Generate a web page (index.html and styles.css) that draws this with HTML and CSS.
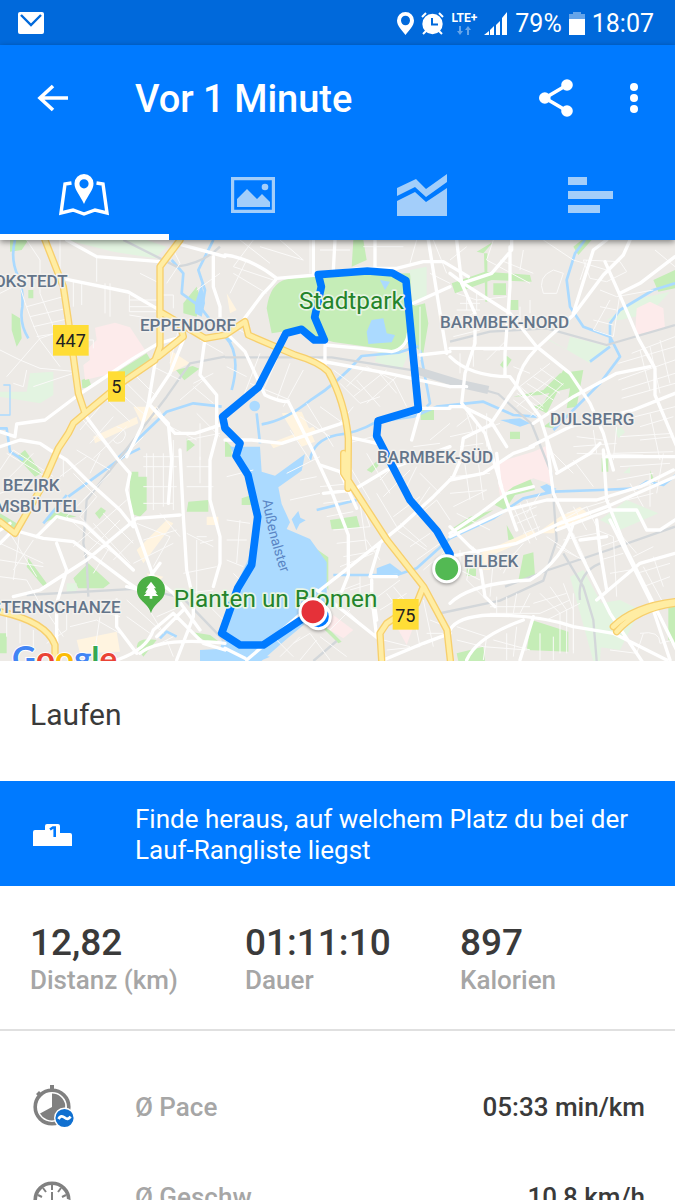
FILE: index.html
```html
<!DOCTYPE html>
<html lang="de">
<head>
<meta charset="utf-8">
<meta name="viewport" content="width=device-width, initial-scale=1">
<title>Vor 1 Minute</title>
<link rel="stylesheet" href="styles.css">
</head>
<body>
<div class="app">
  <div class="status">
    <svg class="status-mail" width="26" height="22" viewBox="0 0 26 22"><rect width="26" height="22" rx="2" fill="#fff"/><path d="M3 3l10 10L23 3" fill="none" stroke="#0069db" stroke-width="2.4"/></svg>
    <div class="status-right">
      <svg width="17" height="23" viewBox="0 0 17 23"><path fill="#fff" fill-rule="evenodd" d="M8.500 0A8.500 8.500 0 0 0 0 8.500C0 14 5 18 8.500 23C12 18 17 14 17 8.500A8.500 8.500 0 0 0 8.500 0zm0 3.700a4.500 4.800 0 1 1 0 9.600a4.500 4.800 0 0 1 0-9.600z"/></svg>
      <svg width="23" height="23" viewBox="0 0 23 23"><g stroke="#fff" stroke-width="2" fill="none"><path d="M1 5l4-4M22 5l-4-4M5 19l-3 3M18 19l3 3"/></g><circle cx="11.500" cy="12" r="10.200" fill="#fff"/><path d="M11 6v6.500h6" fill="none" stroke="#0069db" stroke-width="2"/></svg>
      <div class="lte"><span>LTE+</span><svg width="14" height="9" viewBox="0 0 14 9"><path d="M2 0h2v5h2L3 9L0 5h2zM10 9h2V4h2l-3-4l-3 4h2z" fill="#66a5e9"/></svg></div>
      <svg width="24" height="23" viewBox="0 0 24 23"><path d="M0 23l5-4v4zM6 18l4-4v9H6zM12 13l4-4v14h-4zM18 6l5-6v23h-5z" fill="#fff"/></svg>
      <span>79%</span>
      <svg width="16" height="23" viewBox="0 0 16 23"><path d="M4 0h8v2h4v5H0V2h4z" fill="#66a5e9"/><path d="M0 7h16v16H0z" fill="#fff"/></svg>
      <span>18:07</span>
    </div>
  </div>

  <header class="header">
    <div class="toolbar">
      <button class="icon-btn back" aria-label="Zurück"><svg width="32" height="28" viewBox="0 0 32 28" fill="none" stroke="#fff" stroke-width="3.600"><path d="M31 14H4M16 2L3 14l13 12"/></svg></button>
      <h1>Vor 1 Minute</h1>
      <button class="icon-btn" aria-label="Teilen"><svg width="34" height="38" viewBox="0 0 34 38" fill="#fff"><path d="M28 6L6 19l22 13" fill="none" stroke="#fff" stroke-width="3.600"/><circle cx="28" cy="6" r="5.800"/><circle cx="5.800" cy="19" r="5.800"/><circle cx="28" cy="32" r="5.800"/></svg></button>
      <button class="icon-btn more" aria-label="Mehr"><svg width="8" height="32" viewBox="0 0 8 32" fill="#fff"><circle cx="4" cy="5" r="4"/><circle cx="4" cy="16" r="4"/><circle cx="4" cy="27" r="4"/></svg></button>
    </div>
    <nav class="tabs">
      <button class="tab active" aria-label="Karte"><svg width="50" height="44" viewBox="0 0 50 44"><path d="M12.500 10L6 11L2 40l12-3l11 4l11-4l12 3l-4-29l-6.500-1" fill="none" stroke="#fff" stroke-width="3.400"/><path d="M25 1a9.500 9.500 0 0 0-9.500 9.500C15.500 17 21 22 25 31C29 22 34.500 17 34.500 10.500A9.500 9.500 0 0 0 25 1zm0 5.200a4.600 4.600 0 1 1 0 9.200a4.600 4.600 0 0 1 0-9.200z" fill="#fff" fill-rule="evenodd"/></svg></button>
      <button class="tab" aria-label="Fotos"><svg width="44" height="36" viewBox="0 0 44 36" fill="#a3cefa"><path fill-rule="evenodd" d="M0 0h44v36H0zM3.200 3.200v29.600h37.600V3.200z"/><path d="M6 22l10-10l10 10l5-5l8 8v5H6z"/><circle cx="34" cy="10" r="3.300"/></svg></button>
      <button class="tab" aria-label="Diagramm"><svg width="50" height="42" viewBox="0 0 50 42" fill="#a3cefa"><path d="M0 14L19 5l10 10L50 0v8L29 23L18 13L0 22zM0 27l18-9l11 10l21-14v28H0z"/></svg></button>
      <button class="tab" aria-label="Details"><svg width="46" height="36" viewBox="0 0 46 36" fill="#a3cefa"><path d="M0 0h19v8H0zM0 14h45v8H0zM0 28h32v8H0z"/></svg></button>
    </nav>
  </header>

  <main class="content">
    <section class="map" aria-label="Karte">
      <svg class="map-svg" viewBox="0 0 2025 1263" preserveAspectRatio="xMidYMid slice">
        <!-- land use -->
        <g class="park">
          <path d="M30 0h55l-20 30l-35 5zM85 150h15v25H85zM35 220l25 15l5 60l-15 25l-15-50zM245 420l20-8l10 28l-28 5zM345 400L440 340l15 25l-85 60zM550 190l40-50l10 30l-10 60l-40-10zM528 390l50-12l20 8l-45 35zM560 595l25 20l-25 20z"/>
          <path d="M800 205Q810 130 860 118L945 104L1230 100L1248 150L1232 300L1200 334L1000 306L880 270L815 280zM1060 0h30l10 60l-45 20zM1235 200l40-10l10 60l-15 90l-25-20zM1262 510h40v30h-40zM675 600l20 20v30h-20z"/>
          <path d="M1355 130l100-35l135 10l5 20l-120-5l-110 40zM1430 35l50-30l-30 35zM1452 40l10 0l0 145l-6 0zM1480 130h38v35h-38zM1525 180h30v30h-30zM1720 20l25-20h30l-40 45zM1960 120l65-30v55l-50 10zM1500 375l20-28l15 12l-20 30zM1600 500l30-10l60-100l10 10l-60 120zM1540 470l90-20l50-50l70-10l-20 110l-30 5l10-60l-90 20zM1530 575h30v22h-30zM1630 560l40-30l-10 35z"/>
          <path d="M50 650l25-20l50 70l-20 10zM395 695h20v25h-25zM390 710h50v100l-20 20l-30-10zM285 820l18-18l15 10l-20 25zM565 785l60-5v35h-65zM220 1015l45-45l65 60l-20 15l-75 0zM85 955l55 75l-5 15l-55-65zM0 1180h20v60H0zM0 820l50 30l-15 30L0 865zM410 1220q0-30 60-20l-40 50zM570 1175l60 10l40 30l-50-10zM130 850l30-40l70 20l-80 10z"/>
          <path d="M990 840l80-12l10 35l-85 5zM885 882l100 70v100l-30-70zM725 775l30-10v30h-30zM975 1155l50 50l-10 5l-50-50zM1100 690l35-30v18l-20 20z"/>
          <path d="M1525 725l65-10l15 35l-60 15l-30 45l-30-15zM1520 855l25 45h-20zM1570 945l30-8l5 70l-50 15zM1595 1140l110 35v60l-125-5zM1350 870l60-40l70-20l-110 70zM1805 655h20v40h-20zM1950 690l15 35l-10 10zM1400 980h28v28h-28zM1370 1240l80-20l5 43h-80zM2005 1100l20-10v130l-20-20z"/>
        </g>
        <g class="park-light">
          <path d="M200 0L440 0L500 20L465 55L340 35zM90 400l70-5v70l-40 25L0 470v-15l80 0zM1230 90l50-10v90l-45 20zM1135 330l90 10l-20 50l-80-25z"/>
          <path d="M1650 300l120 70l40-30l20-20l-120-30l-10 40l-55-30zM1820 240l100-65l90-20l-60 65l-90 20zM1975 820l-95-40l-80 60l60 30zM1710 1010l40-20l60 110l-10 163h-20zM1800 1090l60-10l60 30l-60 120l-70-10zM1845 570l20-8l10 15l-20 18zM200 1030h30v30h-30zM1870 700l20-20v20z"/>
        </g>
        <g class="pink">
          <path d="M285 263L345 248L390 262L435 330L340 400L255 420L250 375L270 360L265 325L290 300zM1910 205l40-20l40 20l5 60l-90 20zM1500 665l100-30l45-20l15 120l-60-20l-60 25l-40 30l-10-80z"/>
          <path d="M1000 1125l60 45l-30 25l-50-30zM1190 1160l50 0l-20 55z"/>
        </g>
        <g class="sand">
          <path d="M400 500h70v30l-45 20zM280 590l130-60l5 20l-130 60zM510 330l60 40l-60 30zM845 520l60-5l40 90l-40 15zM810 610l130-50l10 15l-130 50zM680 160l30 50l-20 10z"/>
          <path d="M620 830h35v25h-35zM410 930l90-90l20 10l-90 120zM230 1200l120-25l10 60l-120 5zM440 1000l50 10l-30 30zM1610 880l70-50l60-30l30 25l-110 55zM1440 940l160-70l10 15l-120 55l-20 50h-20z"/>
        </g>

        <!-- water -->
        <g class="water">
          <path d="M1100 275l15-35l35-5l10 45l25 5l-10 22l-70 5zM1140 120l30 5l-15 25zM585 190l20-60l10 60l-10 40l-20-10z"/>
          <circle cx="764" cy="498" r="16"/>
          <path d="M690 620l90 0l5 75l40 12l90-65l-10 50l-70 50l10 50l25 55l-10 20l70 30l50 70l0 130l-120 100l-80 70l-120-30l20-140l65-140l20-120l-30-130zM600 1230l100-5l110 25l-30 13h-180zM875 838l20-25l6 20l16 8l-18 10l-10 20zM1130 985l40-15l40 30l-80 5zM1620 740l20-8l30 15l-30 12zM1500 540l60-5l30 15l-30 10z"/>
        </g>
        <g class="stream">
          <path d="M45 0q-15 60 10 110q15 30 12 90q-10 50 18 95M515 60l35 40l-5 60l55 40l50 65l45 40M640 0l-45 90l20 60l-10 60M350 658L500 515l80-25l85 10M675 290q50 50 20 160M0 565l20 0l10 70l40 25"/>
          <path class="thin" d="M10 435h20v90H0"/>
          <path d="M770 520l10 90M785 553q70-10 150-75q80-50 150-130l110-10l60-20M930 660q10-60 80-75q60-5 120-40l110-15l70-30l140-15l90 40l70 5M1260 330l30 160l-10 10M1755 0l-30 40l-25 80l10 80l40 60l80 30l30 60l-60 80l-80 80l-60 60M1830 310v-60l30-40l100-60l65-20M1830 320l-60 45" />
          <path d="M205 770L370 650L420 625M130 850l70-85M950 810l120-30M1000 1005h190l60-20l100-90l130-60l90-60l90-20l140-5l110-5l30-20l50 10l70-55l80-15M480 1195l20-20l30 15"/>
        </g>

        <!-- railways -->
        <path class="rail" d="M370 0l160 80q80-10 130-60M675 350L570 370L500 470L370 640L260 780l-10 130l10 50l5 110M1350 305l120-30l170-10l180 50l205-60M675 352l320 0l250 40l180 50l70 20l100 90l60 150l15 200l-40 120l-130 60l-190 40M80 1065l350-20l120 30l125 130M2025 860l-200 70l-180 60l-130 50M1690 940l60 100l30 100l10 123M1740 1080q-10-80 60-110M940 1263l70-60"/>
        <path class="rail wide" d="M1245 390l130 40l90 20"/>

        <!-- small streets -->
        <g class="minor">
          <path d="M80 0l40 60v100l40 100l30 80M60 140q30 100 60 160l60 80M0 160l100-50l30 20M80 200l110-30M90 230l110-25M100 260l110-25M110 290l90-15M20 410l100-115l90-30M0 330l60 30l60 25l110 10M180 0v110M220 120v80M245 130v65M330 130v100M315 130v90M290 50v75M388 165v50h90M388 180h90M388 200h90M388 225l90 15M480 165h40v40M250 300h30v25M310 470l80 75M345 445l90 80M380 430l60 60M240 530l90 100M300 500l-60 70M340 530l-70 80M380 560l-100 95M430 590l-70 70M410 410l60 60M460 380l80 40M540 250l-30 120M590 520l70 70M560 600l100-20M470 500l40 60l80 40M580 440l60 50M540 480l70-60M520 600v60M600 550v110M640 400l-60 30M600 300l70 40M590 150l70-50M420 100l60 30M500 130l40-60l-20-40M220 400l-120 40M40 430l30 10l10-50M350 560q40 10 20 40q-20 20-30 0"/>
          <path d="M760 0l-60 80l120 40M720 0l90 70M840 0l70 60l-130-40M700 100l100 60M740 60l-50 100M930 0v100M960 30h90M1090 20h120M700 260l110 60M780 340l-50 130M830 360l-40 90M870 370l-40 110M910 390l-60 110M680 380l60 30M750 430l120 50M1000 390l80 60M1040 440l60-60l80 40l40 80M1060 470l100-80M1100 490l90-80M1020 430l60 60l60-20M1070 420l70 80M1130 390l60 70M960 500l70 50M900 530l90 60M870 570l60 90M920 490l80 130M1060 500l-50 60M1040 610l80-20M1290 600l60-50M1240 620l80-10M1260 200v160M1290 100l60 30M1320 240h40M1300 0l40 100M1250 0l-20 70"/>
          <path d="M1400 20l-50 40M1480 0l-20 60l130 70M1500 60l100 40M1530 120v100M1570 30l-10 60M1560 200v60M1590 180v40M1660 90l30 10l-20 60h-40q-20-50 30-70M1370 160l60 20l90-10M1380 190h60M1370 210h70M1400 160v50M1430 150v60M1360 250l60-30M1630 0l90 60l100 30M1750 60l110 5l20 30l-60 30l-50-10zM1760 60l-20 60M1800 150l50 20l110-20M1860 160l-20 130l-60-20l50-90M1780 240l60 15M1800 200l50 10M2025 80l-60-50M2025 290l-130 50M2025 320l-170 50M2025 360l-170 60M2025 400l-160 50M2025 430l-160 45M2025 500l-120 30M1950 320l30 140M1980 300l30 130M1920 330l30 120M1920 560l100-30M1920 600l100-10M1950 520l30 140M1860 590l160-10M1730 590l80 10M1720 620l130-10M1730 640l200 5M1780 570l10 70M1850 560l-10 100M1580 430l80 50M1600 410l80 50M1620 385l70 50M1550 460l80 50M1540 480l70 50M1650 370l-130 100M1660 410l-110 90M1690 430l-100 100M1560 440l70 60M1400 520l20 60l80-30M1370 560l50-40M1350 590l90-20M1430 540v90M1460 520v100M1380 620l70-10M1540 380l50 20M1520 300l-60 60M1380 340v60M1420 300v80M1450 330h50M1360 290l80-20"/>
          <path d="M0 690l40-60l120 80M20 640l150 90M100 640l-90 90M190 650v60M230 630l100 60M260 650l-80 60M0 760l120-40M300 640l-30 60M220 700l70 70l-50 60M290 740l-90 90M330 700l-80 80M240 830l90 90l-50 80M200 830l80 70l90 60M280 850l110 120M310 820l90 90M340 790l70 80M380 780l-160 140M360 840l-110 110M400 900l-60 60M0 910l130 60M0 960l130 20M30 880l80 130M60 870l-20 150M100 900l-60 90M0 1010l80 10l50 90M430 650h110M430 680h100M430 740h100M430 790h90M460 640v170M490 640v160M520 640v170M440 640v70M560 740h80M560 680h70M600 650v80M410 850l100 40l-50 90M480 820l60 70M430 900l100-30M400 970l120-60M560 880l80 40M590 900v180M590 890h30M640 900l-40 10M550 1000l100-20M560 1060l80-10M620 1090l50 50M430 1080l60 100M380 1080l100 90M380 1130l70 50M360 1180l-70-40l-80 20M200 1080v90l-60 40M130 1100l60 90M300 1130l-20 130M250 1100l110 30M500 1200l20 50M470 1130l70-30M520 1190l-40 20M20 1130v60M60 1150v60M100 1170v60"/>
          <path d="M860 700l100-50M900 720l50-10M870 780l90-20M960 740l100-10M970 790l80-10M980 830l80-15M1000 870l110-10l-30-90M1010 910l90-10l40 60M1030 950l110-20M1020 980l100-40M1080 790l20 140M1050 680l60 100M1040 640v120M1100 640l70 120M1140 720l60-60M1150 770l80-80M1180 830l80-60M1130 760l60 100M1250 680l-40 80M1260 700l60 60M1290 740l-40 60M1250 830l60-50l40 60M1190 870l90 60M1200 850l80 70M1230 920l60-40M1250 960l70-50M1270 990l70-60M1120 1080l80-60M1140 1110l80-50M1160 1060l60 80M1180 1040l50 60M1080 1010v70l40 30M1050 1050l70-20M1040 1110l60 60M1000 1060l80-30M990 1170l60-60M960 1190l80 60M880 1210l50-30l60 80M900 1260l50-60M840 1250l60-60M820 1190l60 60M1150 1200l80 20M1160 1230l100-10M1240 1120l20 100M1270 1080l30 140M1280 1180h50M1290 1140l50 20M680 710l80-20M680 840l70 10M680 900h60M680 960l50 20M720 840l-10 130M700 1000l30 30"/>
          <path d="M1360 660l90-20M1350 710l120-10M1350 760l110-10M1390 640l20 140M1430 630l20 150M1360 800l100-50M1370 820l100 50M1540 800l50 110M1560 790l50 110M1580 780l40 100M1540 830l70-30M1550 850l60-25M1570 880l50-20M1620 760l-40 60M1660 640l60 60M1680 690l100-50M1720 660l60 80M1700 820l130-40M1720 800l40 70M1760 800l30 60M1670 850l90-50M1640 890l90 60M1670 920l80 40M1690 900l100-20M1720 880l40 90M1790 870l50 20l10 180M1800 920l60-20M1800 960l70-20M1830 1000l60-10M1850 870l60 70M1900 750l60-20M1880 780l80-20M1890 730l40 70M1950 700v100M1990 640l-20 120M1840 640l180-5M1860 680l150-10M1850 720l110-20M1380 930v60l60 30M1420 920l-20 100l60 60M1480 960l-10 110M1540 940l-30 60M1570 910l-70 80M1620 1060l60 60v120M1650 1040l50 70v130M1690 1030l30 80v120M1720 1060v180M1600 1090l100-30M1620 1120l90-40M1640 1140l100-50M1490 1070v60M1520 1070v60M1550 1060l-10 60M1590 1060l-30 60M1470 1100h120M1470 1120h150M1370 1160l90 30l-10 70M1370 1200l80 20l130 10M1480 1200l110 30M1520 1180v80M1550 1160l-10 90M1620 1180v80M1660 1190v70M1900 950l60-30M1910 1000l100-30M1930 1040l80-30M1960 950l30 90M1930 980l60 110M1920 1180q60-10 60 30l40-10M1930 1180l-20 60l-80-10"/>
        </g>

        <!-- main streets -->
        <g class="major">
          <path d="M200 0l90 50l190 15M200 118l185 38l95 55M0 575l45 15l5-38l85-12l100-75M235 465L400 355L475 310L530 295M255 525l100 135L390 700L380 750l20 90l60 170l60 50l80 110M675 50l-35-10L530 10M640 50v90l20 60l0 80M615 295l-15 110l50 60l0 120l-20 75v120l30 110l0 80l-20 70M465 370l-20 120l-20 70l-45 90M445 490l60 60l10 110l-10 130M445 490l80 90h60l90-30M550 300l-40 100l-60 90M0 620l60-20l60 10l30 20l50 30l60 60l100 90l40 50"/>
          <path d="M675 45q80 10 155 70l120-10l130-20l110 0l80-20l60 0l75 45M730 240l60-80q30-30 40-45M940 0v100M1005 0l-5 90M1125 0v90M975 320v60M975 315l110 10l90 10q45-10 50-55M945 360l220 40l185 40M675 275l60 60l60 130q40 20 70 20l70 140l60 130l50 130l0 120l-20 50M1285 0l40 250l15 90M1240 190l110-50M1260 345l90-10M1260 505h90M1260 510l-25 90M675 600h80l90 10l180-60M1040 590l90 20"/>
          <path d="M1370 0l15 130l40 90l0 90l-30 90l-10 90l70 90l50 160M1350 100l40 30l140 90l80 100l100 80l60 90l40 90l30 110M1385 130l90-30l60-70V0M1530 20v120l-15 200l0 70M1350 325l260 0l110-100l90-120l60-60l20-45M1720 220l60-190l40-30M1815 65l40 90l60 140l50 90l0 80l80 190M1860 160l60-30l105-80M1350 350q60 60 180 60l90 120l50 160M1610 325q-50 50-60 110l-80 120l-80 40l-10 70M1600 550l120-80l130-70l100-20M1350 500h40l80 40l50 80M1590 620l120-60l190-50l125-50M1350 440h50M1350 720l100-20l90-60l60-20M1810 630l10 150l60 150l150 300M1820 650h210M1670 700l100-60l30-30"/>
          <path d="M0 910l40-40l90 25l90 10l160 120l30 20M110 890l60-60l80 20l150 140M170 910l30 80l-30 100l0 120M40 1070l80-20l140-90l150-125l130-10M540 630l10 200l10 160l20 90l0 50l-50 130M350 1080v80l60 80M380 1040l40 10l60-80M350 1260q90-30 110-90l60-50l30 30l60 60l65 20M420 1240q60-50 255-30M0 870l30-20M550 1110l-80 80M960 1050l90-70l150-120l100-90l60-60l30-70M950 1050l90 70l100 80M1120 1070l10 70M1115 1020v50l15 120M1350 880l90-60l80-60l80-20M960 675l60 20l50 110M970 760l90-10l100-60l190-70M1140 910l-30 100h80M1350 1090q60-60 240-70q100-60 130-170M1150 1260l120-50l80-30M675 1225l60 30M740 1260l200-170"/>
          <path d="M1350 890l170-80l120-30h150l130-40l100-50M1350 860l60 60l25 20l20 130l30 30M1490 640l10 90l50 140M1640 600l20 160l80 180l60 120l30 60l100 150M1670 870l160-60h80l30 60h40l60-40M1350 950l200-40l130-60l140-50l205-90M1790 1080l130-110l105-30M1350 1170q20-40 120-45q150 0 250 35l120 20l60 30l100 50M1400 1260q30-70 170-120M1600 1130l-40 130M1790 840l10 90l20 120M1740 900l80-10M1830 840l60 120l60 120l60 180"/>
        </g>

        <!-- federal roads -->
        <g class="yellow-case"><path d="M135 0L190 140L205 240L235 460L255 520M540 0L480 80V320L465 360L370 425L255 520L220 550L205 580L175 625L120 750L45 880L0 845M480 215l60 35l75 45l60-10l60-40l10 40l140 60q70 20 100 50q50 90 60 200l-1 150M540 250l10 40l-75 60M1031 640v60l130 200l110 140l70 130l10 90M1270 1040l-20 50l-90 60l-20 30l5 80"/><path d="M0 1115q140 30 165 100v48M1840 1160q60-60 185-75M1850 1175q60-70 175-85"/></g>
        <g class="yellow"><path d="M135 0L190 140L205 240L235 460L255 520M540 0L480 80V320L465 360L370 425L255 520L220 550L205 580L175 625L120 750L45 880L0 845M480 215l60 35l75 45l60-10l60-40l10 40l140 60q70 20 100 50q50 90 60 200l-1 150M540 250l10 40l-75 60M1031 640v60l130 200l110 140l70 130l10 90M1270 1040l-20 50l-90 60l-20 30l5 80"/><path d="M0 1115q140 30 165 100v48M1840 1160q60-60 185-75M1850 1175q60-70 175-85"/></g>

        <!-- recorded route -->
        <path class="route" d="M1341 984L1350 942L1311 873L1230 780L1130 588L1134 543L1255 507L1218 122L1177 99L1102 93L955 104L964 140L944 232L973 300L943 300L905 268L858 280L775 442L668 530L675 565L720 610L708 648L744 705L773 830L755 975L713 1045L665 1180L720 1215L790 1215L940 1115"/>

        <!-- labels -->
        <g class="shield"><rect x="159" y="255" width="107" height="92"/><rect x="324" y="394" width="51" height="91"/><rect x="1178" y="1077" width="78" height="92"/></g>
        <g class="road-no"><text x="212" y="321">447</text><text x="349" y="460">5</text><text x="1216" y="1145">75</text></g>
        <g class="district">
          <text x="203" y="140" text-anchor="end">OKSTEDT</text>
          <text x="420" y="273">EPPENDORF</text>
          <text x="1320" y="263">BARMBEK-NORD</text>
          <text x="1650" y="555">DULSBERG</text>
          <text x="1131" y="668">BARMBEK-SÜD</text>
          <text x="1391" y="980">EILBEK</text>
          <text x="8" y="754">BEZIRK</text>
          <text x="244" y="815" text-anchor="end">MSBÜTTEL</text>
          <text x="362" y="1120" text-anchor="end">STERNSCHANZE</text>
        </g>
        <g class="place"><text x="897" y="207">Stadtpark</text><text x="521" y="1100">Planten un Blomen</text></g>
        <path id="lake" d="M788 780C796 840 815 920 845 1005" fill="none"/>
        <text class="lake"><textPath href="#lake">Außenalster</textPath></text>
        <path d="M453 1008a42 42 0 0 0-42 42c0 34 31 34 42 70c11-36 42-36 42-70a42 42 0 0 0-42-42z" fill="#4caf45"/>
        <path d="M453 1025l-15 20h6l-9 13h5l-9 10h18v8h8v-8h18l-9-10h5l-9-13h6z" fill="#fff"/>
        <text class="google" x="36" y="1291"><tspan fill="#4285f4">G</tspan><tspan fill="#ea4335">o</tspan><tspan fill="#fbbc05">o</tspan><tspan fill="#4285f4">g</tspan><tspan fill="#34a853">l</tspan><tspan fill="#ea4335">e</tspan></text>

        <g class="marker">
          <circle cx="955" cy="1130" r="36" fill="#007aff"/>
          <circle cx="939" cy="1115" r="39" fill="#e53139"/>
          <circle cx="1340" cy="986" r="39" fill="#53b953"/>
        </g>
      </svg>
    </section>

    <section class="activity">Laufen</section>

    <a class="banner" href="#rangliste">
      <svg width="40" height="22" viewBox="0 0 40 22"><path d="M0 8q0-2 2-2h10V2q0-2 2-2h11q2 0 2 2v7h10q2 0 2 2v11H0z" fill="#fff"/><path d="M17 5.500l3-2h1.700V13" fill="none" stroke="#007aff" stroke-width="2.600"/></svg>
      <span>Finde heraus, auf welchem Platz du bei der Lauf-Rangliste liegst</span>
    </a>

    <dl class="stats">
      <div><dd>12,82</dd><dt>Distanz (km)</dt></div>
      <div><dd>01:11:10</dd><dt>Dauer</dt></div>
      <div><dd>897</dd><dt>Kalorien</dt></div>
    </dl>

    <dl class="details">
      <div class="row">
        <svg width="42" height="44" viewBox="0 0 42 44"><circle cx="19" cy="22" r="16.800" fill="none" stroke="#808080" stroke-width="3.600"/><path d="M17 0h4v6h-4zM3 9l3-3l3 3l-3 3z" fill="#808080"/><path d="M19 22V8.500a13.500 13.500 0 1 1-12 20z" fill="#808080"/><circle cx="31.500" cy="33" r="9.800" fill="#1070d0" stroke="#fff" stroke-width="1.400"/><path d="M25.500 34q2.500-4.500 6-1.500t6-1" fill="none" stroke="#fff" stroke-width="2.800"/></svg>
        <dt>Ø Pace</dt><dd>05:33 min/km</dd>
      </div>
      <div class="row">
        <svg width="42" height="44" viewBox="0 0 42 44"><circle cx="19" cy="25" r="16.800" fill="none" stroke="#808080" stroke-width="3.600"/><path d="M19 10v5M10 13l3 4M28 13l-3 4M5 20l4 2M33 20l-4 2M19 17v8" stroke="#808080" stroke-width="2"/><circle cx="31.500" cy="34" r="9.800" fill="#1070d0" stroke="#fff" stroke-width="1.400"/></svg>
        <dt>Ø Geschw.</dt><dd>10,8 km/h</dd>
      </div>
    </dl>
  </main>
</div>
</body>
</html>
```
FILE: styles.css
```css
* { box-sizing: border-box; }
body, h1, dl, dd, dt { margin: 0; }
body { font-family: Roboto, "Noto Sans", sans-serif; background: #fff; color: #3a3a3a; }
svg { display: block; flex: none; }
button { border: 0; padding: 0; background: none; cursor: pointer; }

.app { display: flex; flex-direction: column; height: 100vh; overflow: hidden; }

.status { display: flex; justify-content: space-between; align-items: center; height: 45px; padding: 0 21px 0 18px; background: #0069db; color: #fff; font-size: 25px; }
.status-right { display: flex; align-items: center; gap: 7px; padding-top: 1px; }
.lte { display: flex; flex-direction: column; align-items: center; gap: 2px; font-size: 12px; line-height: 12px; font-weight: 700; }

.header { position: relative; z-index: 1; background: #007aff; color: #fff; box-shadow: 0 2px 6px rgba(0, 0, 0, .45); }
.toolbar { display: flex; align-items: center; height: 108px; padding: 0 32px 0 37px; }
.icon-btn { display: flex; align-items: center; justify-content: center; min-width: 16px; height: 48px; padding-bottom: 3px; }
.back { width: 32px; }
h1 { flex: 1; margin-left: 66px; font-size: 38px; line-height: 48px; font-weight: 500; }
.more { width: 18px; margin-left: 52px; }
.tabs { display: grid; grid-template-columns: repeat(4, 1fr); height: 87px; }
.tab { display: flex; align-items: center; justify-content: center; border-bottom: 6px solid transparent; padding-top: 2px; }
.tab.active { border-bottom-color: #fff; }

.content { flex: 1; min-height: 0; overflow: hidden; }
.map { aspect-ratio: 675 / 421; overflow: hidden; background: #edeae6; }
.map-svg { width: 100%; height: 100%; }
.park { fill: #c5edb7; }
.park-light { fill: #e3f4e1; }
.pink { fill: #fdebeb; }
.sand { fill: #fff4e0; }
.water { fill: #abdaff; }
.stream, .rail, .minor, .major, .yellow, .yellow-case, .route { fill: none; stroke-linejoin: round; }
.stream { stroke: #abdaff; stroke-width: 8; }
.thin { stroke-width: 4; }
.rail { stroke: #d3d7da; stroke-width: 7; }
.rail.wide { stroke-width: 24; }
.minor { stroke: #fbfaf9; stroke-width: 3; }
.major { stroke: #fff; stroke-width: 10; stroke-linecap: round; }
.yellow-case { stroke: #f7cf6c; stroke-width: 22; stroke-linecap: round; }
.yellow { stroke: #ffeda3; stroke-width: 14; stroke-linecap: round; }
.route { stroke: #007aff; stroke-width: 23; }
.shield { fill: #ffdd36; }
.road-no { font-size: 54px; fill: #222; text-anchor: middle; }
.district, .place, .lake { paint-order: stroke; stroke-linejoin: round; }
.district { font-size: 51px; font-weight: 500; fill: #64758a; stroke: #f3f1ee; stroke-width: 9; }
.place { font-size: 73px; fill: #24842b; stroke: #e8f5e4; stroke-width: 10; }
.lake { font-size: 42px; fill: #5a85c4; }
.google { font-family: Lato, sans-serif; font-size: 99px; font-weight: 700; stroke: #fff; stroke-width: 6; paint-order: stroke; }
.marker { stroke: #fff; stroke-width: 9; filter: drop-shadow(0 4px 5px rgba(0, 0, 0, .35)); }

.activity { height: 120px; padding: 36px 30px 0; font-size: 30px; line-height: 36px; }

.banner { display: flex; align-items: center; gap: 62px; min-height: 105px; padding: 2px 30px 0 33px; background: #007aff; color: #fff; font-size: 26px; line-height: 31px; text-decoration: none; }

.stats { display: grid; grid-template-columns: repeat(3, 1fr); height: 145px; padding: 36px 0 0 30px; border-bottom: 2px solid #e0e0e0; }
.stats div { display: flex; flex-direction: column; }
.stats dd { font-size: 37px; line-height: 42px; font-weight: 500; }
.stats dt { font-size: 26px; line-height: 32px; font-weight: 500; color: #a6a6a6; }

.details { padding-top: 31px; }
.row { display: flex; align-items: center; height: 90px; padding: 0 30px 0 33px; font-size: 26px; font-weight: 500; }
.row dt { flex: 1; margin-left: 60px; color: #a6a6a6; }
```
